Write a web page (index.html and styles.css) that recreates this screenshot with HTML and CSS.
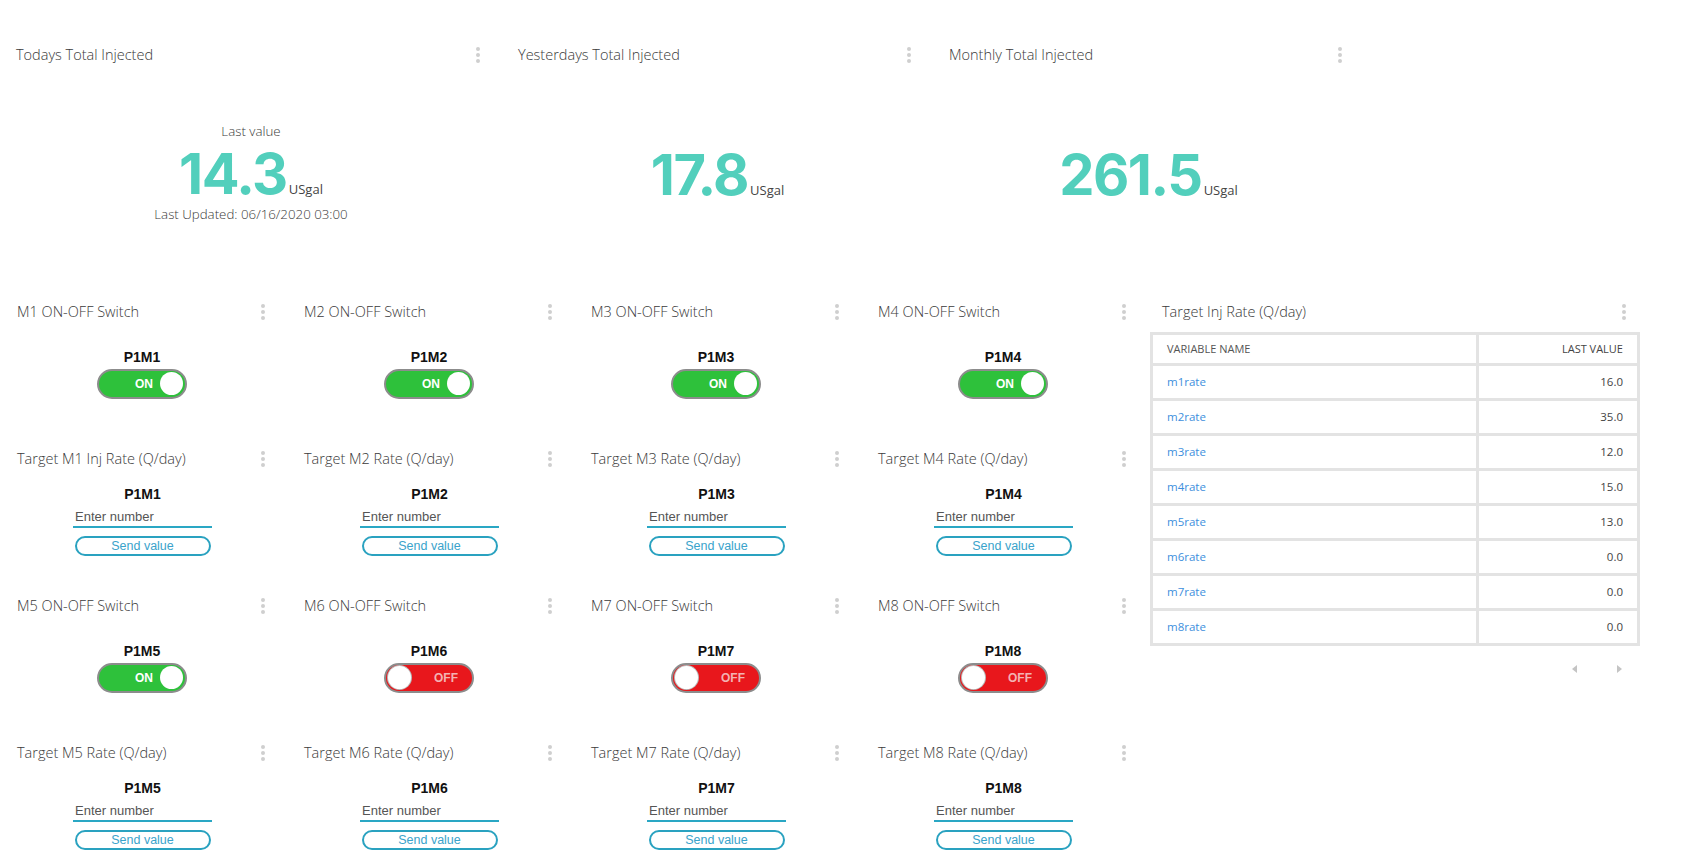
FILE: index.html
```html
<!DOCTYPE html>
<html lang="en">
<head>
<meta charset="utf-8">
<title>Injection Dashboard</title>
<link rel="stylesheet" href="styles.css">
</head>
<body>
<main class="dashboard">
  <section class="top-row">
    <article class="widget kpi wide">
      <header class="widget-head"><h2>Todays Total Injected</h2><span class="menu"><i></i><i></i><i></i></span></header>
      <div class="kpi-body">
        <div class="kpi-caption">Last value</div>
        <div class="kpi-value">14.3<span class="unit">USgal</span></div>
        <div class="kpi-caption">Last Updated: 06/16/2020 03:00</div>
      </div>
    </article>
    <article class="widget kpi">
      <header class="widget-head"><h2>Yesterdays Total Injected</h2><span class="menu"><i></i><i></i><i></i></span></header>
      <div class="kpi-body single">
        <div class="kpi-value">17.8<span class="unit">USgal</span></div>
      </div>
    </article>
    <article class="widget kpi">
      <header class="widget-head"><h2>Monthly Total Injected</h2><span class="menu"><i></i><i></i><i></i></span></header>
      <div class="kpi-body single">
        <div class="kpi-value">261.5<span class="unit">USgal</span></div>
      </div>
    </article>
  </section>

  <section class="control-grid">
    <article class="widget table-widget">
      <header class="widget-head"><h2>Target Inj Rate (Q/day)</h2><span class="menu"><i></i><i></i><i></i></span></header>
      <table class="var-table">
        <thead><tr><th>Variable name</th><th class="num">Last value</th></tr></thead>
        <tbody>
          <tr><td><a href="#">m1rate</a></td><td class="num">16.0</td></tr>
          <tr><td><a href="#">m2rate</a></td><td class="num">35.0</td></tr>
          <tr><td><a href="#">m3rate</a></td><td class="num">12.0</td></tr>
          <tr><td><a href="#">m4rate</a></td><td class="num">15.0</td></tr>
          <tr><td><a href="#">m5rate</a></td><td class="num">13.0</td></tr>
          <tr><td><a href="#">m6rate</a></td><td class="num">0.0</td></tr>
          <tr><td><a href="#">m7rate</a></td><td class="num">0.0</td></tr>
          <tr><td><a href="#">m8rate</a></td><td class="num">0.0</td></tr>
        </tbody>
      </table>
      <div class="pager"><span class="arrow left"></span><span class="arrow right"></span></div>
    </article>

    <article class="widget">
      <header class="widget-head"><h2>M1 ON-OFF Switch</h2><span class="menu"><i></i><i></i><i></i></span></header>
      <div class="switch-body"><div class="device">P1M1</div><div class="switch on"><span class="label">ON</span><span class="knob"></span></div></div>
    </article>
    <article class="widget">
      <header class="widget-head"><h2>M2 ON-OFF Switch</h2><span class="menu"><i></i><i></i><i></i></span></header>
      <div class="switch-body"><div class="device">P1M2</div><div class="switch on"><span class="label">ON</span><span class="knob"></span></div></div>
    </article>
    <article class="widget">
      <header class="widget-head"><h2>M3 ON-OFF Switch</h2><span class="menu"><i></i><i></i><i></i></span></header>
      <div class="switch-body"><div class="device">P1M3</div><div class="switch on"><span class="label">ON</span><span class="knob"></span></div></div>
    </article>
    <article class="widget">
      <header class="widget-head"><h2>M4 ON-OFF Switch</h2><span class="menu"><i></i><i></i><i></i></span></header>
      <div class="switch-body"><div class="device">P1M4</div><div class="switch on"><span class="label">ON</span><span class="knob"></span></div></div>
    </article>

    <article class="widget">
      <header class="widget-head"><h2>Target M1 Inj Rate (Q/day)</h2><span class="menu"><i></i><i></i><i></i></span></header>
      <div class="input-body"><div class="device">P1M1</div><input class="num-input" type="text" placeholder="Enter number"><button class="send">Send value</button></div>
    </article>
    <article class="widget">
      <header class="widget-head"><h2>Target M2 Rate (Q/day)</h2><span class="menu"><i></i><i></i><i></i></span></header>
      <div class="input-body"><div class="device">P1M2</div><input class="num-input" type="text" placeholder="Enter number"><button class="send">Send value</button></div>
    </article>
    <article class="widget">
      <header class="widget-head"><h2>Target M3 Rate (Q/day)</h2><span class="menu"><i></i><i></i><i></i></span></header>
      <div class="input-body"><div class="device">P1M3</div><input class="num-input" type="text" placeholder="Enter number"><button class="send">Send value</button></div>
    </article>
    <article class="widget">
      <header class="widget-head"><h2>Target M4 Rate (Q/day)</h2><span class="menu"><i></i><i></i><i></i></span></header>
      <div class="input-body"><div class="device">P1M4</div><input class="num-input" type="text" placeholder="Enter number"><button class="send">Send value</button></div>
    </article>

    <article class="widget">
      <header class="widget-head"><h2>M5 ON-OFF Switch</h2><span class="menu"><i></i><i></i><i></i></span></header>
      <div class="switch-body"><div class="device">P1M5</div><div class="switch on"><span class="label">ON</span><span class="knob"></span></div></div>
    </article>
    <article class="widget">
      <header class="widget-head"><h2>M6 ON-OFF Switch</h2><span class="menu"><i></i><i></i><i></i></span></header>
      <div class="switch-body"><div class="device">P1M6</div><div class="switch off"><span class="knob"></span><span class="label">OFF</span></div></div>
    </article>
    <article class="widget">
      <header class="widget-head"><h2>M7 ON-OFF Switch</h2><span class="menu"><i></i><i></i><i></i></span></header>
      <div class="switch-body"><div class="device">P1M7</div><div class="switch off"><span class="knob"></span><span class="label">OFF</span></div></div>
    </article>
    <article class="widget">
      <header class="widget-head"><h2>M8 ON-OFF Switch</h2><span class="menu"><i></i><i></i><i></i></span></header>
      <div class="switch-body"><div class="device">P1M8</div><div class="switch off"><span class="knob"></span><span class="label">OFF</span></div></div>
    </article>

    <article class="widget">
      <header class="widget-head"><h2>Target M5 Rate (Q/day)</h2><span class="menu"><i></i><i></i><i></i></span></header>
      <div class="input-body"><div class="device">P1M5</div><input class="num-input" type="text" placeholder="Enter number"><button class="send">Send value</button></div>
    </article>
    <article class="widget">
      <header class="widget-head"><h2>Target M6 Rate (Q/day)</h2><span class="menu"><i></i><i></i><i></i></span></header>
      <div class="input-body"><div class="device">P1M6</div><input class="num-input" type="text" placeholder="Enter number"><button class="send">Send value</button></div>
    </article>
    <article class="widget">
      <header class="widget-head"><h2>Target M7 Rate (Q/day)</h2><span class="menu"><i></i><i></i><i></i></span></header>
      <div class="input-body"><div class="device">P1M7</div><input class="num-input" type="text" placeholder="Enter number"><button class="send">Send value</button></div>
    </article>
    <article class="widget">
      <header class="widget-head"><h2>Target M8 Rate (Q/day)</h2><span class="menu"><i></i><i></i><i></i></span></header>
      <div class="input-body"><div class="device">P1M8</div><input class="num-input" type="text" placeholder="Enter number"><button class="send">Send value</button></div>
    </article>
  </section>
</main>
</body>
</html>
```

FILE: styles.css
```css
* { box-sizing: border-box; }

html, body {
  margin: 0;
  background: #ffffff;
  font-family: "Open Sans", "Liberation Sans", sans-serif;
  color: #444;
  overflow: hidden;
}

.dashboard {
  padding-top: 21px;
}

/* ---------- shared widget chrome ---------- */
.widget {
  display: flex;
  flex-direction: column;
  min-width: 0;
}

.widget-head {
  display: flex;
  align-items: center;
  justify-content: space-between;
  height: 44px;
  padding: 24px 22px 0 17px;
  flex: none;
}

.widget-head h2 {
  margin: 0;
  font-size: 14.5px;
  font-weight: 300;
  line-height: 20px;
  color: #3a3a3a;
  white-space: nowrap;
}

.menu {
  display: flex;
  flex-direction: column;
  gap: 2px;
  width: 4px;
}

.menu i {
  display: block;
  width: 4px;
  height: 4px;
  border-radius: 50%;
  background: #cfcfcf;
}

/* ---------- KPI row ---------- */
.top-row {
  display: flex;
  height: 257px;
}

.kpi { width: 431px; }
.kpi.wide { width: 502px; }
.kpi .widget-head { padding-left: 16px; padding-right: 22px; }

.kpi-body {
  flex: 1;
  display: flex;
  flex-direction: column;
  align-items: center;
  justify-content: center;
  padding-top: 2px;
}

.kpi-body.single { padding-top: 7px; }

.kpi-caption {
  font-size: 13.3px;
  font-weight: 300;
  line-height: 18px;
  color: #3a3a3a;
}

.kpi-value {
  font-family: Inter, "Open Sans", sans-serif;
  font-weight: 700;
  font-size: 56px;
  line-height: 56px;
  letter-spacing: -1.5px;
  color: #52cfbc;
  margin: 6px 0 3px;
}

.kpi-body.single .kpi-value { margin: 0; }

.unit {
  font-family: "Open Sans", sans-serif;
  font-weight: 400;
  font-size: 13px;
  line-height: 13px;
  letter-spacing: 0;
  color: #444;
  margin-left: 2px;
}

/* ---------- control grid ---------- */
.control-grid {
  display: grid;
  grid-template-columns: repeat(4, 287px) 502px;
  grid-template-rows: repeat(4, 147px);
}

.table-widget {
  grid-column: 5;
  grid-row: 1 / span 3;
}

.table-widget .widget-head { padding-left: 14px; padding-right: 24px; }

.device {
  font-family: "Liberation Sans", Arial, sans-serif;
  font-weight: 700;
  font-size: 14px;
  line-height: 16px;
  color: #111;
}

/* switch widgets */
.switch-body {
  flex: 1;
  display: flex;
  flex-direction: column;
  align-items: center;
  justify-content: center;
  gap: 4px;
  padding-right: 3px;
}

.switch {
  width: 90px;
  height: 30px;
  border-radius: 15px;
  border: 2px solid #8c8c8c;
  display: flex;
  align-items: center;
  padding: 0 2px;
  font-family: "Liberation Sans", Arial, sans-serif;
  font-weight: 700;
  font-size: 12px;
}

.switch.on {
  background: #2ec13b;
  justify-content: flex-end;
  gap: 7px;
}

.switch.off {
  background: #e8171c;
  justify-content: space-between;
  padding-right: 14px;
}

.switch .label { color: #ffffff; }
.switch.off .label { color: #f3b3b3; }

.knob {
  width: 23px;
  height: 23px;
  border-radius: 50%;
  background: #ffffff;
}

.switch.off .knob { box-shadow: 0 0 0 1px #b9b9b9; }

/* numeric input widgets */
.input-body {
  flex: 1;
  display: flex;
  flex-direction: column;
  align-items: center;
  justify-content: center;
  padding-right: 2px;
}

.num-input {
  width: 139px;
  height: 20px;
  margin-top: 6px;
  border: 0;
  border-bottom: 2px solid #2aa7c4;
  padding: 0 2px;
  font-family: "Liberation Sans", Arial, sans-serif;
  font-size: 13px;
  color: #333;
  background: transparent;
  outline: none;
}

.num-input::placeholder { color: #555; }

.send {
  width: 136px;
  height: 20px;
  margin-top: 8px;
  border: 2px solid #2aa2c0;
  border-radius: 10px;
  background: #ffffff;
  font-family: "Liberation Sans", Arial, sans-serif;
  font-size: 12.5px;
  line-height: 14px;
  color: #3aa3cb;
  padding: 0;
}

/* ---------- variables table ---------- */
.var-table {
  width: 490px;
  margin: 10px 0 0 2px;
  border-collapse: separate;
  border-spacing: 0;
  border-top: 3px solid #e3e3e3;
  border-left: 3px solid #e3e3e3;
  font-size: 11.5px;
}

.var-table th,
.var-table td {
  border-right: 3px solid #e3e3e3;
  border-bottom: 3px solid #e3e3e3;
  padding: 7px 14px;
  line-height: 18px;
  height: 35px;
  text-align: left;
}

.var-table th {
  font-size: 11px;
  font-weight: 400;
  text-transform: uppercase;
  color: #555;
  padding: 6px 14px;
  line-height: 16px;
  height: 31px;
  width: 67%;
}

.var-table th.num { width: auto; }
.var-table .num { text-align: right; color: #444; }

.var-table a {
  color: #3d8fdd;
  text-decoration: none;
}

.pager {
  display: flex;
  justify-content: flex-end;
  gap: 40px;
  padding: 19px 28px 0 0;
}

.arrow {
  width: 0;
  height: 0;
  border-top: 4px solid transparent;
  border-bottom: 4px solid transparent;
}

.arrow.left { border-right: 5px solid #c4c4c4; }
.arrow.right { border-left: 5px solid #c4c4c4; }
```
